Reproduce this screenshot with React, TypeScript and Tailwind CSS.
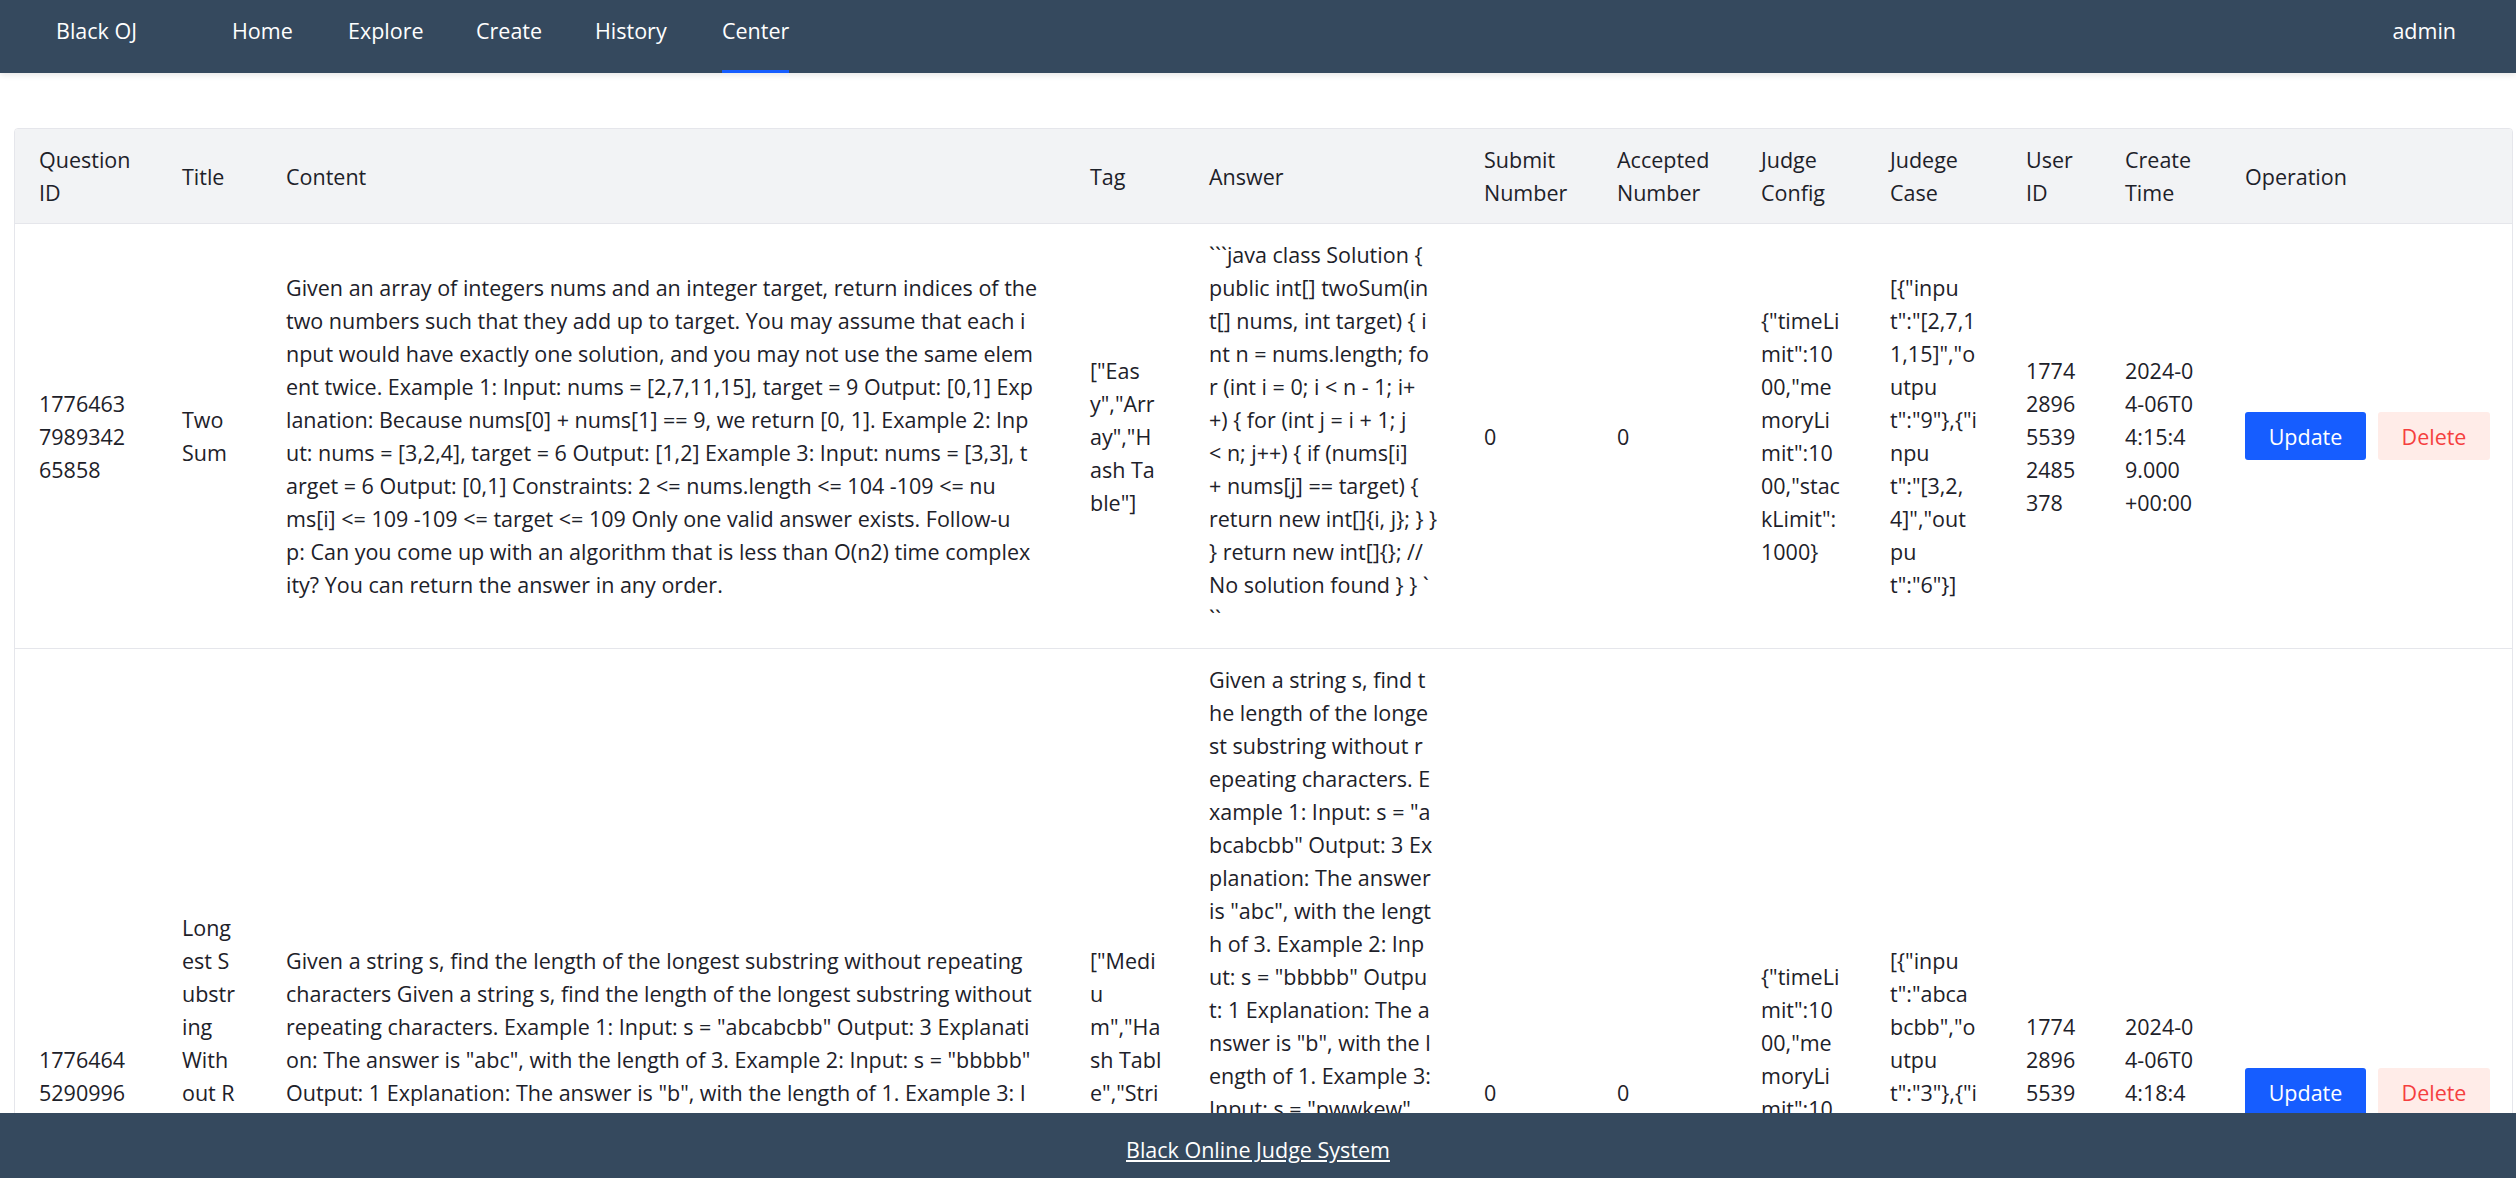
import React from "react";

type Row = {
  id: string[];
  title: string[];
  content: string[];
  tag: string[];
  answer: string[];
  submit: string[];
  accepted: string[];
  config: string[];
  cases: string[];
  user: string[];
  time: string[];
};

const config = ['{"timeLi', 'mit":10', '00,"me', 'moryLi', 'mit":10', '00,"stac', 'kLimit":', "1000}"];
const user = ["1774", "2896", "5539", "2485", "378"];

const rows: Row[] = [
  {
    id: ["1776463", "7989342", "65858"],
    title: ["Two", "Sum"],
    content: [
      "Given an array of integers nums and an integer target, return indices of the",
      "two numbers such that they add up to target. You may assume that each i",
      "nput would have exactly one solution, and you may not use the same elem",
      "ent twice. Example 1: Input: nums = [2,7,11,15], target = 9 Output: [0,1] Exp",
      "lanation: Because nums[0] + nums[1] == 9, we return [0, 1]. Example 2: Inp",
      "ut: nums = [3,2,4], target = 6 Output: [1,2] Example 3: Input: nums = [3,3], t",
      "arget = 6 Output: [0,1] Constraints: 2 <= nums.length <= 104 -109 <= nu",
      "ms[i] <= 109 -109 <= target <= 109 Only one valid answer exists. Follow-u",
      "p: Can you come up with an algorithm that is less than O(n2) time complex",
      "ity? You can return the answer in any order.",
    ],
    tag: ['["Eas', 'y","Arr', 'ay","H', "ash Ta", 'ble"]'],
    answer: [
      "```java class Solution {",
      "public int[] twoSum(in",
      "t[] nums, int target) { i",
      "nt n = nums.length; fo",
      "r (int i = 0; i < n - 1; i+",
      "+) { for (int j = i + 1; j",
      "< n; j++) { if (nums[i]",
      "+ nums[j] == target) {",
      "return new int[]{i, j}; } }",
      "} return new int[]{}; //",
      "No solution found } } `",
      "``",
    ],
    submit: ["0"],
    accepted: ["0"],
    config,
    cases: ['[{"inpu', 't":"[2,7,1', '1,15]","o', "utpu", 't":"9"},{"i', "npu", 't":"[3,2,', '4]","out', "pu", 't":"6"}]'],
    user,
    time: ["2024-0", "4-06T0", "4:15:4", "9.000", "+00:00"],
  },
  {
    id: ["1776464", "5290996", "13698"],
    title: ["Long", "est S", "ubstr", "ing", "With", "out R", "epeat", "ing", "Chara", "cter", "s"],
    content: [
      "Given a string s, find the length of the longest substring without repeating",
      "characters Given a string s, find the length of the longest substring without",
      'repeating characters. Example 1: Input: s = "abcabcbb" Output: 3 Explanati',
      'on: The answer is "abc", with the length of 3. Example 2: Input: s = "bbbbb"',
      'Output: 1 Explanation: The answer is "b", with the length of 1. Example 3: I',
      'nput: s = "pwwkew" Output: 3 Explanation: The answer is "wke", with the leng',
      'th of 3. Notice that the answer must be a substring, "pwke" is a subsequence',
      "and not a substring. Constraints: 0 <= s.length <= 5 * 104 s consists of En",
      "glish letters, digits, symbols and spaces.",
    ],
    tag: ['["Medi', "u", 'm","Ha', "sh Tabl", 'e","Stri', 'ng","Sli', "ding", "Windo", 'w"]'],
    answer: [
      "Given a string s, find t",
      "he length of the longe",
      "st substring without r",
      "epeating characters. E",
      'xample 1: Input: s = "a',
      'bcabcbb" Output: 3 Ex',
      "planation: The answer",
      'is "abc", with the lengt',
      "h of 3. Example 2: Inp",
      'ut: s = "bbbbb" Outpu',
      "t: 1 Explanation: The a",
      'nswer is "b", with the l',
      "ength of 1. Example 3:",
      'Input: s = "pwwkew"',
      "Output: 3 Explanation: T",
      'he answer is "wke", wit',
      "h the length of 3. Notic",
      "e that the answer must b",
      'e a substring, "pwke" is',
      "a subsequence and not a",
      "substring. Constraints: 0",
      "<= s.length <= 5 * 104 s",
      "consists of English lette",
      "rs, digits, symbols and s",
      "paces. ```java class Sol",
      "ution { ... } ```",
    ],
    submit: ["0"],
    accepted: ["0"],
    config,
    cases: ['[{"inpu', 't":"abca', 'bcbb","o', "utpu", 't":"3"},{"i', "npu", 't":"bbbbb"', '","outpu', 't":"1"}]'],
    user,
    time: ["2024-0", "4-06T0", "4:18:4", "1.000", "+00:00"],
  },
];

const headers: string[][] = [
  ["Question", "ID"],
  ["Title"],
  ["Content"],
  ["Tag"],
  ["Answer"],
  ["Submit", "Number"],
  ["Accepted", "Number"],
  ["Judge", "Config"],
  ["Judege", "Case"],
  ["User", "ID"],
  ["Create", "Time"],
  ["Operation"],
];

function Lines({ lines }: { lines: string[] }) {
  return (
    <div className="whitespace-pre">
      {lines.map((l, i) => (
        <div key={i}>{l}</div>
      ))}
    </div>
  );
}

function Cell({ children, head }: { children: React.ReactNode; head?: boolean }) {
  return (
    <div
      className={
        head
          ? "flex items-center px-6 py-3.5 border-b border-[#e5e6eb] bg-[#f2f3f5]"
          : "flex items-center px-6 py-3.5 border-b border-[#e5e6eb] bg-white"
      }
    >
      {children}
    </div>
  );
}

export default function App() {
  return (
    <div className="flex h-screen flex-col overflow-hidden bg-white font-['Open_Sans',sans-serif] text-[21.5px] leading-[33px] text-[#1d2129]">
      <nav className="relative z-10 flex h-[73px] shrink-0 items-stretch bg-[#35495e] text-white shadow-[0_2px_6px_rgba(0,0,0,0.1)]">
        <div className="w-[232px] pl-[56px] pt-[14px]">Black OJ</div>
        <div className="w-[116px] pt-[14px]">Home</div>
        <div className="w-[128px] pt-[14px]">Explore</div>
        <div className="w-[119px] pt-[14px]">Create</div>
        <div className="w-[127px] pt-[14px]">History</div>
        <div className="flex">
          <div className="border-b-[3px] border-[#165dff] pt-[14px]">Center</div>
        </div>
        <div className="ml-auto pr-[60px] pt-[14px]">admin</div>
      </nav>

      <main className="min-h-0 flex-1 overflow-hidden pl-[14px] pr-[3px] pt-[55px]">
        <div className="overflow-hidden rounded-[4px] border border-[#e5e6eb]">
          <div className="grid grid-cols-[143px_104px_804px_119px_275px_133px_144px_129px_136px_99px_120px_1fr]">
            {headers.map((h, i) => (
              <Cell head key={i}>
                <Lines lines={h} />
              </Cell>
            ))}
            {rows.map((r, ri) => (
              <React.Fragment key={ri}>
                <Cell><Lines lines={r.id} /></Cell>
                <Cell><Lines lines={r.title} /></Cell>
                <Cell><Lines lines={r.content} /></Cell>
                <Cell><Lines lines={r.tag} /></Cell>
                <Cell><Lines lines={r.answer} /></Cell>
                <Cell><Lines lines={r.submit} /></Cell>
                <Cell><Lines lines={r.accepted} /></Cell>
                <Cell><Lines lines={r.config} /></Cell>
                <Cell><Lines lines={r.cases} /></Cell>
                <Cell><Lines lines={r.user} /></Cell>
                <Cell><Lines lines={r.time} /></Cell>
                <Cell>
                  <div className="flex items-center gap-3">
                    <button className="flex h-[48px] w-[121px] items-center justify-center rounded-[3px] bg-[#165dff] text-white">
                      Update
                    </button>
                    <button className="flex h-[48px] w-[112px] items-center justify-center rounded-[3px] bg-[#ffece8] text-[#f53f3f]">
                      Delete
                    </button>
                  </div>
                </Cell>
              </React.Fragment>
            ))}
          </div>
        </div>
      </main>

      <footer className="h-[65px] shrink-0 bg-[#35495e] pt-[20px] text-center text-white">
        <a className="underline">Black Online Judge System</a>
      </footer>
    </div>
  );
}
